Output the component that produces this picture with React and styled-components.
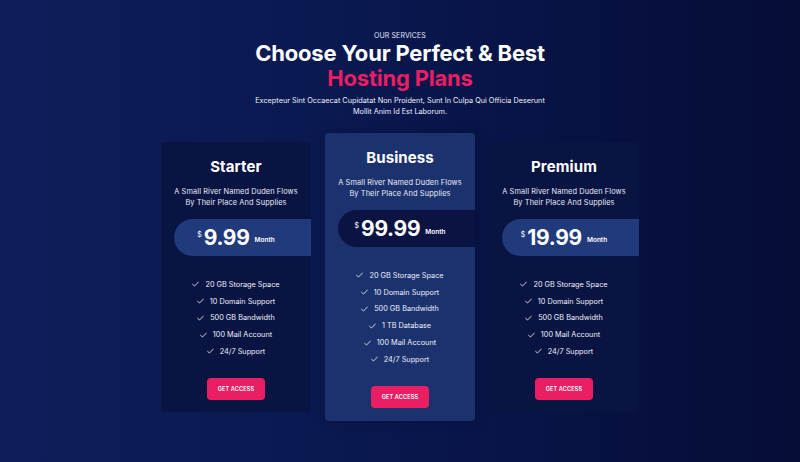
import React from "react";
import styled, { createGlobalStyle } from "styled-components";

const Global = createGlobalStyle`
  html, body { margin: 0; padding: 0; }
  body {
    width: 800px;
    height: 462px;
    overflow: hidden;
    font-family: "Inter", "Noto Sans", sans-serif;
    background: #081447;
  }
`;

const Page = styled.section`
  width: 800px;
  height: 462px;
  box-sizing: border-box;
  padding-top: 32px;
  background: linear-gradient(90deg, #0e1e5a 0%, #0a1850 45%, #050c36 100%);
  display: flex;
  flex-direction: column;
  align-items: center;
  color: #fff;
`;

const Eyebrow = styled.div`
  font-size: 7px;
  line-height: 7px;
  margin-bottom: 2px;
  letter-spacing: 0.1px;
  color: #e6e9f5;
`;

const Title = styled.h1`
  margin: 0;
  font-size: 22px;
  line-height: 25px;
  font-weight: 700;
  text-align: center;
  letter-spacing: -0.2px;
`;

const Accent = styled.span`
  display: block;
  color: #e91e63;
`;

const Lead = styled.p`
  margin: 4px 0 0;
  width: 300px;
  font-size: 7.3px;
  line-height: 11px;
  text-align: center;
  color: #eef0fa;
`;

const Row = styled.div`
  margin-top: 16px;
  display: flex;
  align-items: center;
  gap: 14px;
`;

const Card = styled.div`
  width: 150px;
  box-sizing: border-box;
  border-radius: 4px;
  background: ${(p) => (p.$featured ? "#1c326e" : "#0a1442")};
  padding: 16px 0 ${(p) => (p.$featured ? 13 : 12)}px;
  display: flex;
  flex-direction: column;
  align-items: center;
  box-shadow: ${(p) => (p.$featured ? "0 0 12px rgba(0,0,0,0.25)" : "none")};
`;

const PlanName = styled.h2`
  margin: 0;
  font-size: 15px;
  line-height: 18px;
  font-weight: 700;
  letter-spacing: 0.1px;
`;

const Desc = styled.p`
  margin: 10px 0 0;
  font-size: 7.4px;
  line-height: 11px;
  letter-spacing: 0.1px;
  text-align: center;
  color: #e8ebf6;
`;

const Pill = styled.div`
  margin-top: 11px;
  align-self: stretch;
  margin-left: 13px;
  height: 37px;
  padding-right: 13px;
  border-radius: 19px 0 0 19px;
  background: ${(p) => (p.$featured ? "#0a1342" : "#213a7c")};
  display: flex;
  align-items: center;
  justify-content: center;
`;

const Currency = styled.span`
  font-size: 7px;
  align-self: flex-start;
  margin-top: 11px;
  margin-right: 2px;
`;

const Amount = styled.span`
  font-size: 21px;
  font-weight: 700;
  letter-spacing: -0.3px;
`;

const Per = styled.span`
  font-size: 6.5px;
  font-weight: 600;
  margin-left: 5px;
  margin-top: 6px;
`;

const Features = styled.ul`
  list-style: none;
  margin: 20px 0 0;
  padding: 0;
  display: flex;
  flex-direction: column;
  align-items: center;
`;

const Feature = styled.li`
  display: flex;
  align-items: center;
  gap: 6px;
  height: 16.8px;
  font-size: 7.3px;
  color: #eef0fa;
`;

const Button = styled.button`
  margin-top: 18px;
  width: 58px;
  height: 22px;
  border: none;
  border-radius: 4px;
  background: #ea1f63;
  color: #fff;
  font-family: inherit;
  font-size: 5.6px;
  font-weight: 600;
  letter-spacing: 0.1px;
  padding: 0;
`;

const Check = () => (
  <svg width="7" height="6" viewBox="0 0 12 10" fill="none">
    <path d="M1 5.5 L4.3 8.5 L11 1.5" stroke="#e6e9f5" strokeWidth="1.5" strokeLinecap="round" strokeLinejoin="round" />
  </svg>
);

const plans = [
  {
    name: "Starter",
    price: "9.99",
    features: ["20 GB Storage Space", "10 Domain Support", "500 GB Bandwidth", "100 Mail Account", "24/7 Support"],
  },
  {
    name: "Business",
    price: "99.99",
    featured: true,
    features: ["20 GB Storage Space", "10 Domain Support", "500 GB Bandwidth", "1 TB Database", "100 Mail Account", "24/7 Support"],
  },
  {
    name: "Premium",
    price: "19.99",
    features: ["20 GB Storage Space", "10 Domain Support", "500 GB Bandwidth", "100 Mail Account", "24/7 Support"],
  },
];

export default function App() {
  return (
    <>
      <Global />
      <Page>
        <Eyebrow>OUR SERVICES</Eyebrow>
        <Title>
          Choose Your Perfect &amp; Best
          <Accent>Hosting Plans</Accent>
        </Title>
        <Lead>
          Excepteur Sint Occaecat Cupidatat Non Proident, Sunt In Culpa Qui Officia Deserunt Mollit Anim Id Est Laborum.
        </Lead>
        <Row>
          {plans.map((p) => (
            <Card key={p.name} $featured={p.featured}>
              <PlanName>{p.name}</PlanName>
              <Desc>
                A Small River Named Duden Flows
                <br />
                By Their Place And Supplies
              </Desc>
              <Pill $featured={p.featured}>
                <Currency>$</Currency>
                <Amount>{p.price}</Amount>
                <Per>Month</Per>
              </Pill>
              <Features>
                {p.features.map((f) => (
                  <Feature key={f}>
                    <Check />
                    {f}
                  </Feature>
                ))}
              </Features>
              <Button>GET ACCESS</Button>
            </Card>
          ))}
        </Row>
      </Page>
    </>
  );
}
